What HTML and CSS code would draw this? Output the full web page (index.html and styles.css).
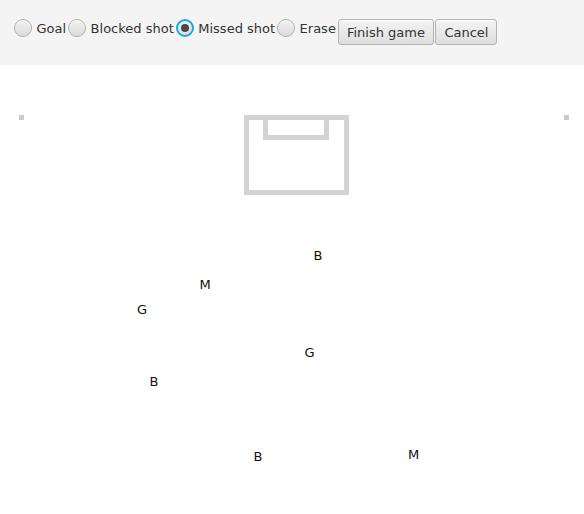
FILE: index.html
```html
<!DOCTYPE html>
<html>
<head>
<meta charset="utf-8">
<link rel="stylesheet" href="styles.css">
</head>
<body>
<div class="toolbar">
  <label class="radio"><span class="dot"></span><span class="rtext">Goal</span></label>
  <label class="radio"><span class="dot"></span><span class="rtext">Blocked shot</span></label>
  <label class="radio selected"><span class="dot"><span class="mark"></span></span><span class="rtext">Missed shot</span></label>
  <label class="radio"><span class="dot"></span><span class="rtext">Erase</span></label>
  <button class="btn">Finish game</button>
  <button class="btn">Cancel</button>
</div>
<div class="field">
  <svg class="rink" width="584" height="449" viewBox="0 0 584 449">
    <rect x="19" y="50" width="5" height="5" fill="#cbcbcb"/>
    <rect x="564" y="50" width="5" height="5" fill="#cbcbcb"/>
    <rect x="246.5" y="52.5" width="100" height="75" fill="none" stroke="#d3d3d3" stroke-width="5"/>
    <path d="M265.5 52.5 V72.5 H326.5 V52.5" fill="none" stroke="#d3d3d3" stroke-width="5"/>
  </svg>
  <span class="shot" style="left:318px;top:191px">B</span>
  <span class="shot" style="left:205px;top:220px">M</span>
  <span class="shot" style="left:142px;top:245px">G</span>
  <span class="shot" style="left:309.5px;top:288px">G</span>
  <span class="shot" style="left:154px;top:317px">B</span>
  <span class="shot" style="left:258px;top:392px">B</span>
  <span class="shot" style="left:413.5px;top:390px">M</span>
</div>
</body>
</html>
```
FILE: styles.css
```css
html, body {
  margin: 0;
  padding: 0;
  background: #ffffff;
  font-family: "DejaVu Sans", sans-serif;
  font-size: 13px;
  color: #333333;
}
.toolbar {
  height: 65px;
  box-sizing: border-box;
  background: #f4f4f4;
  padding: 19px 0 0 14px;
  display: flex;
  align-items: flex-start;
  gap: 2px;
}
.radio {
  display: flex;
  align-items: center;
  height: 18px;
  gap: 4.5px;
}
.rtext {
  line-height: 18px;
  padding-top: 1px;
  white-space: nowrap;
}
.dot {
  width: 18px;
  height: 18px;
  box-sizing: border-box;
  border-radius: 50%;
  border: 1px solid #b0b0b0;
  background: linear-gradient(#f2f2f2, #dcdcdc);
  box-shadow: inset 0 1px 0 #ffffff;
  display: flex;
  align-items: center;
  justify-content: center;
  flex: none;
}
.selected .dot {
  border: 2px solid #1fa8dc;
  background: linear-gradient(#f4f4f4, #dedede);
  box-shadow: none;
}
.mark {
  width: 8px;
  height: 8px;
  border-radius: 50%;
  background: #4a4a4a;
}
.btn {
  font-family: "DejaVu Sans", sans-serif;
  font-size: 13px;
  color: #333333;
  height: 26px;
  padding: 1px 8px 0;
  margin: 0;
  border: 1px solid #b4b4b4;
  border-radius: 3px;
  background: linear-gradient(#f4f4f4, #dedede);
  box-shadow: inset 0 1px 0 #ffffff;
  white-space: nowrap;
}
.btn + .btn {
  margin-left: -0.5px;
}
.field {
  position: relative;
  height: 449px;
  overflow: hidden;
}
.rink {
  display: block;
}
.shot {
  position: absolute;
  transform: translate(-50%, -50%);
  line-height: 16px;
  color: #111111;
  font-size: 13px;
}
```
